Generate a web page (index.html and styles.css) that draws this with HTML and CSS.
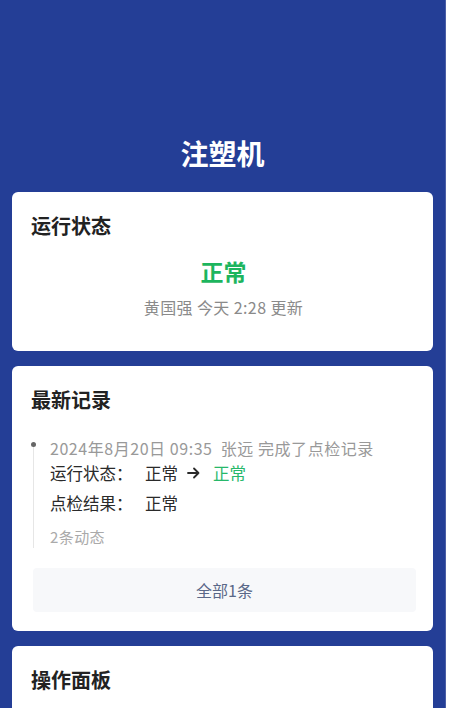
FILE: index.html
```html
<!DOCTYPE html>
<html lang="zh-CN">
<head>
<meta charset="utf-8">
<title>注塑机</title>
<link rel="stylesheet" href="styles.css">
</head>
<body>
<div class="page">
  <header class="header">
    <h1 class="page-title">注塑机</h1>
  </header>

  <section class="card card-status">
    <h2 class="card-title">运行状态</h2>
    <div class="status-value">正常</div>
    <div class="status-meta">黄国强 今天 2:28 更新</div>
  </section>

  <section class="card card-records">
    <h2 class="card-title">最新记录</h2>
    <div class="timeline">
      <span class="timeline-dot"></span>
      <div class="tl-head">2024年8月20日 09:35&nbsp; 张远 完成了点检记录</div>
      <div class="tl-row"><span class="tl-label">运行状态：</span><span class="tl-val">正常</span><svg class="tl-arrow" width="13" height="12" viewBox="0 0 13 12" aria-hidden="true"><path d="M1 6 H11.5 M7 1.5 L11.5 6 L7 10.5" fill="none" stroke="#2a2a2a" stroke-width="1.8" stroke-linecap="round" stroke-linejoin="round"/></svg><span class="tl-val tl-green">正常</span></div>
      <div class="tl-row tl-row2"><span class="tl-label">点检结果：</span><span class="tl-val">正常</span></div>
      <div class="tl-count">2条动态</div>
    </div>
    <div class="more-btn">全部1条</div>
  </section>

  <section class="card card-panel">
    <h2 class="card-title">操作面板</h2>
  </section>
</div>
</body>
</html>
```

FILE: styles.css
```css
html, body {
  margin: 0;
  padding: 0;
  background: #ffffff;
}
body {
  font-family: "Noto Sans CJK SC", "Noto Sans", sans-serif;
  color: #222;
}
.page {
  width: 446px;
  background: #243e96;
  border-right: 1px solid #4a5ea6;
  padding: 0 12px 40px 12px;
  box-sizing: border-box;
  min-height: 760px;
}
.header {
  padding-top: 135px;
  padding-bottom: 21px;
}
.page-title {
  margin: 0;
  text-align: center;
  color: #fff;
  font-size: 28px;
  line-height: 36px;
  font-weight: 700;
}
.card {
  background: #fff;
  border-radius: 6px;
  padding: 20px 17px 0 19px;
  margin-bottom: 15px;
}
.card-title {
  margin: 0;
  font-size: 20px;
  line-height: 28px;
  font-weight: 700;
  color: #222;
}
.card-status {
  padding-bottom: 33px;
}
.status-value {
  margin-top: 15px;
  text-align: center;
  font-size: 23px;
  line-height: 32px;
  font-weight: 700;
  color: #1db55e;
}
.status-meta {
  margin-top: 9px;
  text-align: center;
  font-size: 16px;
  line-height: 22px;
  letter-spacing: 0.4px;
  color: #8a8a8a;
}
.card-records {
  padding-bottom: 19px;
}
.timeline {
  position: relative;
  margin-top: 23px;
  margin-left: 2px;
  padding-left: 17px;
}
.timeline::before {
  content: "";
  position: absolute;
  left: 0;
  top: 9px;
  bottom: 0;
  width: 1px;
  background: #e6e6e6;
}
.timeline-dot {
  position: absolute;
  left: -2px;
  top: 5px;
  width: 5px;
  height: 5px;
  border-radius: 50%;
  background: #666;
}
.tl-head {
  font-size: 16px;
  line-height: 22px;
  letter-spacing: 0.55px;
  color: #999;
  white-space: nowrap;
}
.tl-row {
  display: flex;
  align-items: center;
  font-size: 16.5px;
  line-height: 28px;
  color: #2a2a2a;
}
.tl-row2 {
  margin-top: 2px;
}
.tl-label {
  width: 95px;
}
.tl-arrow {
  margin: 0 13px 0 9px;
  flex: none;
}
.tl-green {
  color: #27b86a;
}
.tl-count {
  margin-top: 9px;
  font-size: 15px;
  line-height: 22px;
  letter-spacing: 0.4px;
  color: #aaa;
}
.more-btn {
  margin-top: 20px;
  margin-left: 2px;
  height: 44px;
  border-radius: 4px;
  background: #f7f8fa;
  display: flex;
  align-items: center;
  justify-content: center;
  font-size: 16px;
  color: #5a6888;
}
.card-panel {
  min-height: 120px;
}
```
